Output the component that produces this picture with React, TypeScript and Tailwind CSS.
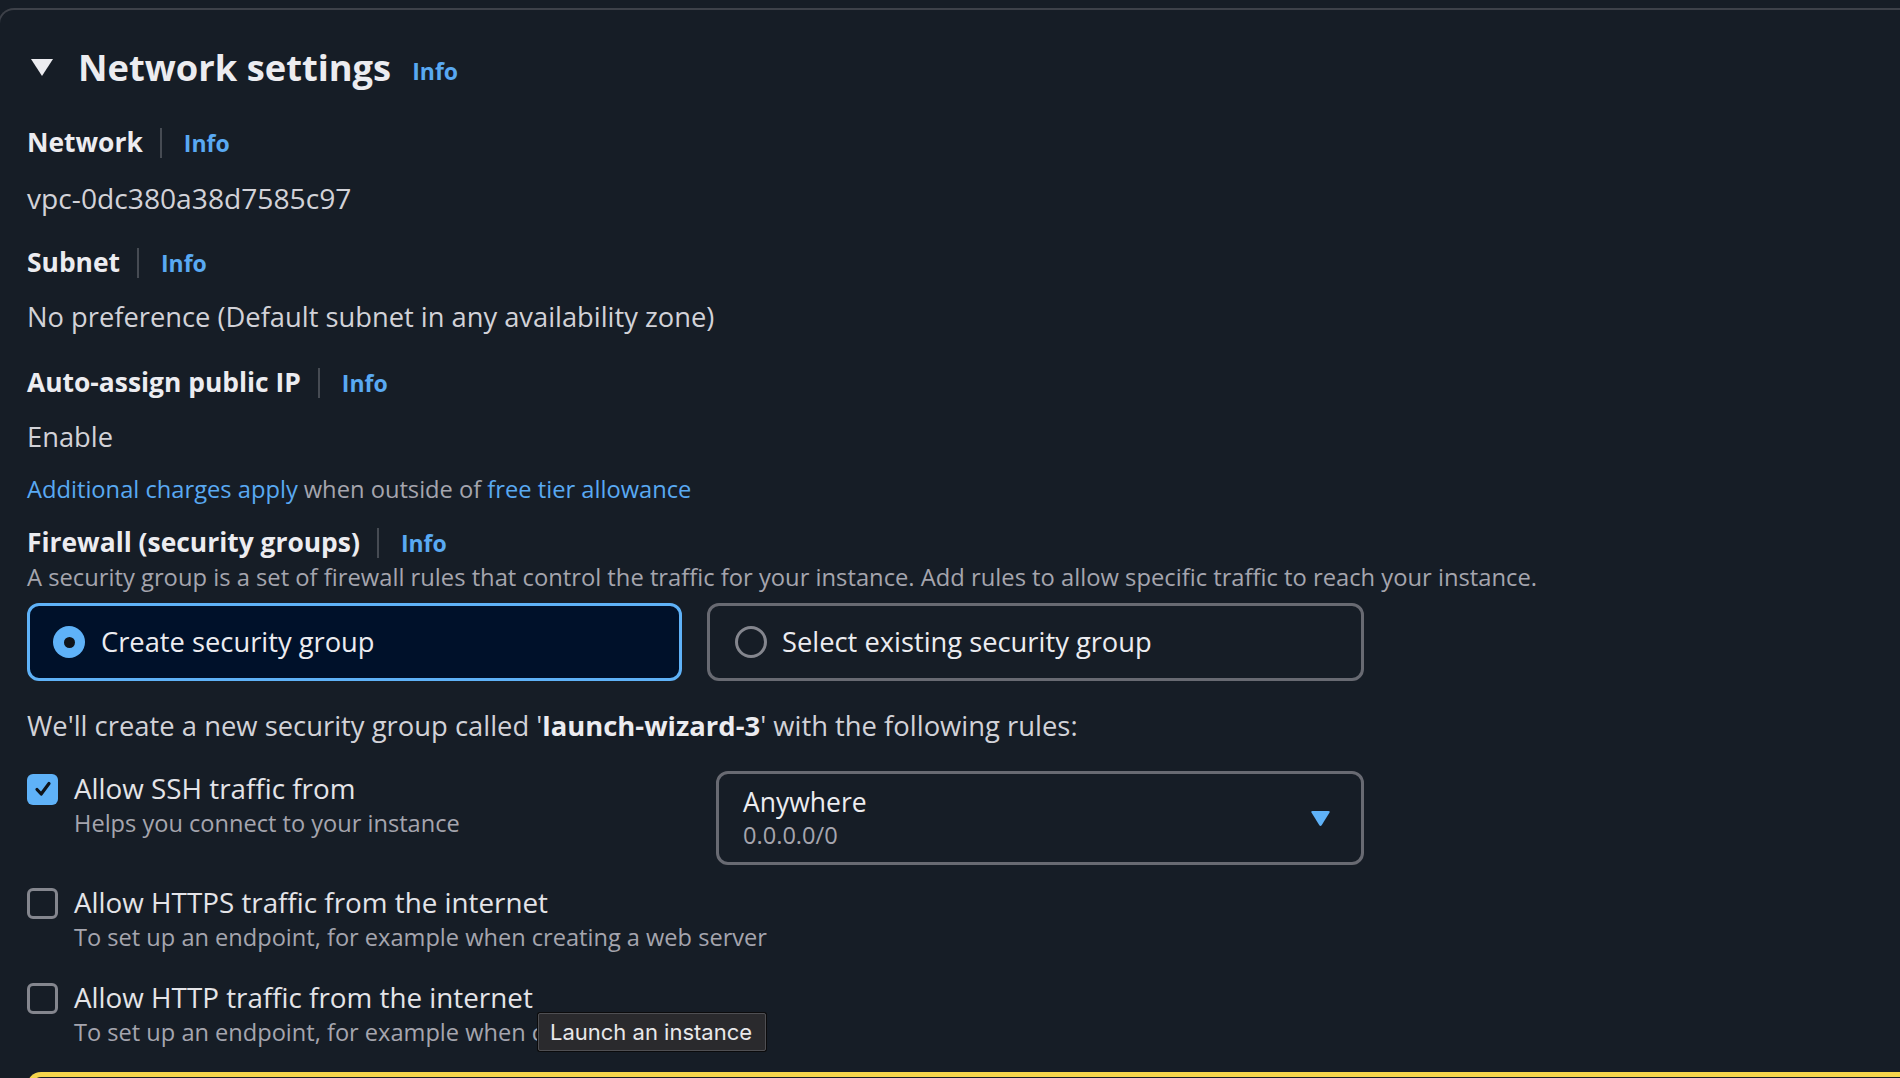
import * as React from "react";

const Info = () => (
  <span className="text-[23px] font-bold leading-none text-[#59a9f2]">Info</span>
);

const Label: React.FC<{ text: string; className?: string }> = ({ text, className }) => (
  <div className={"flex h-[36px] items-center " + (className || "")}>
    <span className="text-[26.4px] font-bold text-[#ececf0]">{text}</span>
    <span className="ml-[17px] mr-[22px] h-[30px] w-[2px] bg-[#464b53]" />
    <Info />
  </div>
);

const Checkbox: React.FC<{ checked?: boolean }> = ({ checked }) =>
  checked ? (
    <span className="flex h-[31px] w-[31px] shrink-0 items-center justify-center rounded-[6px] bg-[#5fb2f8]">
      <svg width="20" height="20" viewBox="0 0 20 20" fill="none">
        <path
          d="M4 10.5 L8.2 15 L16 4.5"
          stroke="#0f141a"
          strokeWidth="3.2"
          strokeLinecap="round"
          strokeLinejoin="round"
        />
      </svg>
    </span>
  ) : (
    <span className="h-[31px] w-[31px] shrink-0 rounded-[6px] border-[3px] border-[#84868e]" />
  );

const Rule: React.FC<{ checked?: boolean; title: string; sub: string; className?: string }> = ({
  checked,
  title,
  sub,
  className,
}) => (
  <div className={className}>
    <div className="flex h-[36px] items-center">
      <Checkbox checked={checked} />
      <span className="ml-[16px] text-[27.8px] text-[#e4e4e8]">{title}</span>
    </div>
    <div className="mt-[2px] flex h-[30px] items-center pl-[47px] text-[23.6px] text-[#a5a5ae]">
      {sub}
    </div>
  </div>
);

export default function App() {
  return (
    <div className="relative h-[1078px] w-full overflow-hidden bg-[#161d26] font-['Open_Sans',sans-serif]">
      <div className="ml-[-2px] mt-[8px] rounded-tl-[16px] border-l-2 border-t-2 border-[#3d4149] pl-[27px]">
        {/* header */}
        <div className="mt-[35px] flex h-[44px] items-center">
          <svg width="24" height="19" viewBox="0 0 24 19" className="ml-[3px]">
            <path d="M1 1 H23 L12 18 Z" fill="#ececf0" />
          </svg>
          <span className="ml-[24px] text-[36.3px] font-bold text-[#ececf0]">Network settings</span>
          <span className="ml-[21px] mt-[12px]">
            <Info />
          </span>
        </div>

        <Label text="Network" className="mt-[36px]" />
        <div className="mt-[19px] flex h-[36px] items-center text-[28.2px] text-[#d2d2d8]">
          vpc-0dc380a38d7585c97
        </div>

        <Label text="Subnet" className="mt-[29px]" />
        <div className="mt-[18px] flex h-[36px] items-center text-[27.3px] text-[#d2d2d8]">
          No preference (Default subnet in any availability zone)
        </div>

        <Label text="Auto-assign public IP" className="mt-[30px]" />
        <div className="mt-[18px] flex h-[36px] items-center text-[27.3px] text-[#d2d2d8]">
          Enable
        </div>

        <div className="mt-[17px] flex h-[36px] items-center text-[23.7px] text-[#a5a5ae]">
          <span className="text-[#59a9f2]">Additional charges apply</span>
          <span className="mx-[6px]">when outside of</span>
          <span className="text-[#59a9f2]">free tier allowance</span>
        </div>

        <Label text="Firewall (security groups)" className="mt-[17px]" />
        <div className="mt-[2px] flex h-[30px] items-center text-[23.75px] text-[#a5a5ae]">
          A security group is a set of firewall rules that control the traffic for your instance. Add rules
          to allow specific traffic to reach your instance.
        </div>

        {/* tiles */}
        <div className="mt-[10px] flex gap-[25px]">
          <div className="flex h-[78px] w-[655px] items-center rounded-[12px] border-[3px] border-[#5fb2f8] bg-[#00112a] pl-[23px]">
            <span className="flex h-[32px] w-[32px] items-center justify-center rounded-full bg-[#5fb2f8]">
              <span className="h-[11px] w-[11px] rounded-full bg-[#0f141a]" />
            </span>
            <span className="ml-[16px] text-[27.3px] text-[#ececf0]">Create security group</span>
          </div>
          <div className="flex h-[78px] w-[657px] items-center rounded-[12px] border-[3px] border-[#686a72] pl-[25px]">
            <span className="h-[32px] w-[32px] rounded-full border-[3px] border-[#84868e]" />
            <span className="ml-[15px] text-[27.3px] text-[#ececf0]">Select existing security group</span>
          </div>
        </div>

        <div className="mt-[27px] flex h-[36px] items-center text-[27.4px] text-[#d2d2d8]">
          <span>
            We'll create a new security group called '<b className="text-[#ececf0]">launch-wizard-3</b>' with
            the following rules:
          </span>
        </div>

        {/* rules */}
        <div className="mt-[27px] flex">
          <Rule checked title="Allow SSH traffic from" sub="Helps you connect to your instance" className="w-[689px]" />
          <div className="flex h-[94px] w-[648px] items-center justify-between rounded-[12px] border-[3px] border-[#686a72] pl-[24px] pr-[30px]">
            <div className="flex flex-col">
              <span className="h-[34px] text-[26.5px] leading-[34px] text-[#ececf0]">Anywhere</span>
              <span className="h-[32px] text-[23.6px] leading-[32px] text-[#a5a5ae]">0.0.0.0/0</span>
            </div>
            <svg width="21" height="17" viewBox="0 0 21 17">
              <path
                d="M2.5 1 H18.5 Q20.5 1 19.4 2.8 L11.8 15 Q10.5 17 9.2 15 L1.6 2.8 Q0.5 1 2.5 1 Z"
                fill="#5fb2f8"
              />
            </svg>
          </div>
        </div>

        <Rule
          title="Allow HTTPS traffic from the internet"
          sub="To set up an endpoint, for example when creating a web server"
          className="mt-[20px]"
        />
        <Rule
          title="Allow HTTP traffic from the internet"
          sub="To set up an endpoint, for example when creating a web server"
          className="mt-[27px]"
        />

        <div className="mt-[24px] h-[40px] rounded-tl-[14px] border-l-[5px] border-t-[5px] border-[#f5d54c]" />
      </div>

      {/* tooltip */}
      <div className="absolute left-[538px] top-[1013px] flex h-[38px] w-[228px] items-center rounded-[2px] border border-[#4f4f53] bg-[#2a2a2d] pl-[11px] font-['Inter',sans-serif] text-[22px] text-[#e8e8ea] shadow-[0_0_0_1px_#0b0b0c]">
        Launch an instance
      </div>
    </div>
  );
}
